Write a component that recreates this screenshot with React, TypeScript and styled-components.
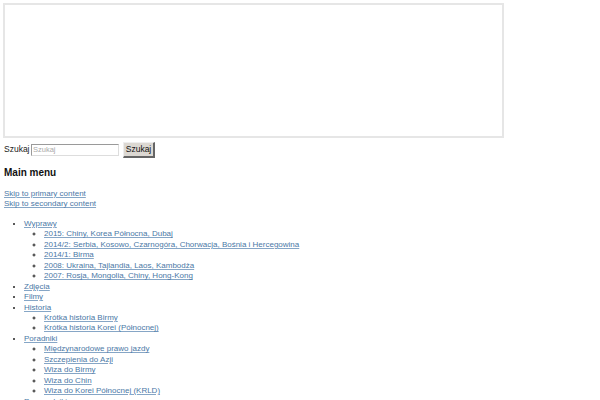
import React from "react";
import styled, { createGlobalStyle } from "styled-components";

const Global = createGlobalStyle`
  body { margin: 0; background: #fff; font-family: "Liberation Sans", Arial, sans-serif; color: #111; }
`;

const Page = styled.div`
  padding: 3px 0 0 3px;
  font-size: 8px;
  line-height: 10.45px;
`;

const Frame = styled.div`
  width: 497px;
  height: 131px;
  border: 2px solid #e6e6e6;
  background: #fff;
`;

const SearchRow = styled.form`
  display: flex;
  align-items: center;
  margin: 4px 0 0 1px;
  height: 15px;
`;

const Label = styled.label`
  font-size: 8.5px;
  color: #222;
  width: 27px;
`;

const Input = styled.input`
  box-sizing: border-box;
  width: 88px;
  height: 12px;
  border: 1px solid #9a9a9a;
  border-right-color: #ddd;
  border-bottom-color: #ddd;
  padding: 0 1px;
  font-size: 7.5px;
  font-family: "Liberation Sans", Arial, sans-serif;
  margin-right: 4px;
  &::placeholder { color: #aaa; }
`;

const Button = styled.button`
  box-sizing: border-box;
  height: 16px;
  width: 32px;
  padding: 0;
  font-size: 8.5px;
  font-family: "Liberation Sans", Arial, sans-serif;
  background: #dcd8d2;
  color: #111;
  border: 1px solid #888;
  border-top-color: #eee;
  border-left-color: #eee;
  border-right: 2px solid #666;
  border-bottom: 2px solid #666;
`;

const Heading = styled.h3`
  font-size: 10px;
  font-weight: bold;
  margin: 10px 0 0 1px;
  line-height: 12px;
  color: #111;
`;

const SkipLinks = styled.div`
  margin: 10px 0 0 1px;
  display: flex;
  flex-direction: column;
`;

const Link = styled.a`
  color: #4a78a6;
  text-decoration: underline;
  text-decoration-color: #86a6c6;
`;

const List = styled.ul<{ $nested?: boolean }>`
  margin: ${(p) => (p.$nested ? "0" : "9px 0 0 0")};
  padding-left: ${(p) => (p.$nested ? "20px" : "21px")};
  list-style-type: ${(p) => (p.$nested ? "circle" : "disc")};
  & > li::marker {
    color: #222;
  }
`;

type Item = { label: string; children?: string[] };

const menu: Item[] = [
  {
    label: "Wyprawy",
    children: [
      "2015: Chiny, Korea Północna, Dubaj",
      "2014/2: Serbia, Kosowo, Czarnogóra, Chorwacja, Bośnia i Hercegowina",
      "2014/1: Birma",
      "2008: Ukraina, Tajlandia, Laos, Kambodża",
      "2007: Rosja, Mongolia, Chiny, Hong-Kong",
    ],
  },
  { label: "Zdjęcia" },
  { label: "Filmy" },
  {
    label: "Historia",
    children: ["Krótka historia Birmy", "Krótka historia Korei (Północnej)"],
  },
  {
    label: "Poradniki",
    children: [
      "Międzynarodowe prawo jazdy",
      "Szczepienia do Azji",
      "Wiza do Birmy",
      "Wiza do Chin",
      "Wiza do Korei Północnej (KRLD)",
    ],
  },
  { label: "Przewodniki" },
];

export default function App() {
  return (
    <>
      <Global />
      <Page>
        <Frame />
        <SearchRow onSubmit={(e) => e.preventDefault()}>
          <Label htmlFor="s">Szukaj</Label>
          <Input id="s" placeholder="Szukaj" />
          <Button type="submit">Szukaj</Button>
        </SearchRow>
        <Heading>Main menu</Heading>
        <SkipLinks>
          <Link href="#">Skip to primary content</Link>
          <Link href="#">Skip to secondary content</Link>
        </SkipLinks>
        <List>
          {menu.map((m) => (
            <li key={m.label}>
              <Link href="#">{m.label}</Link>
              {m.children && (
                <List $nested>
                  {m.children.map((c) => (
                    <li key={c}>
                      <Link href="#">{c}</Link>
                    </li>
                  ))}
                </List>
              )}
            </li>
          ))}
        </List>
      </Page>
    </>
  );
}
